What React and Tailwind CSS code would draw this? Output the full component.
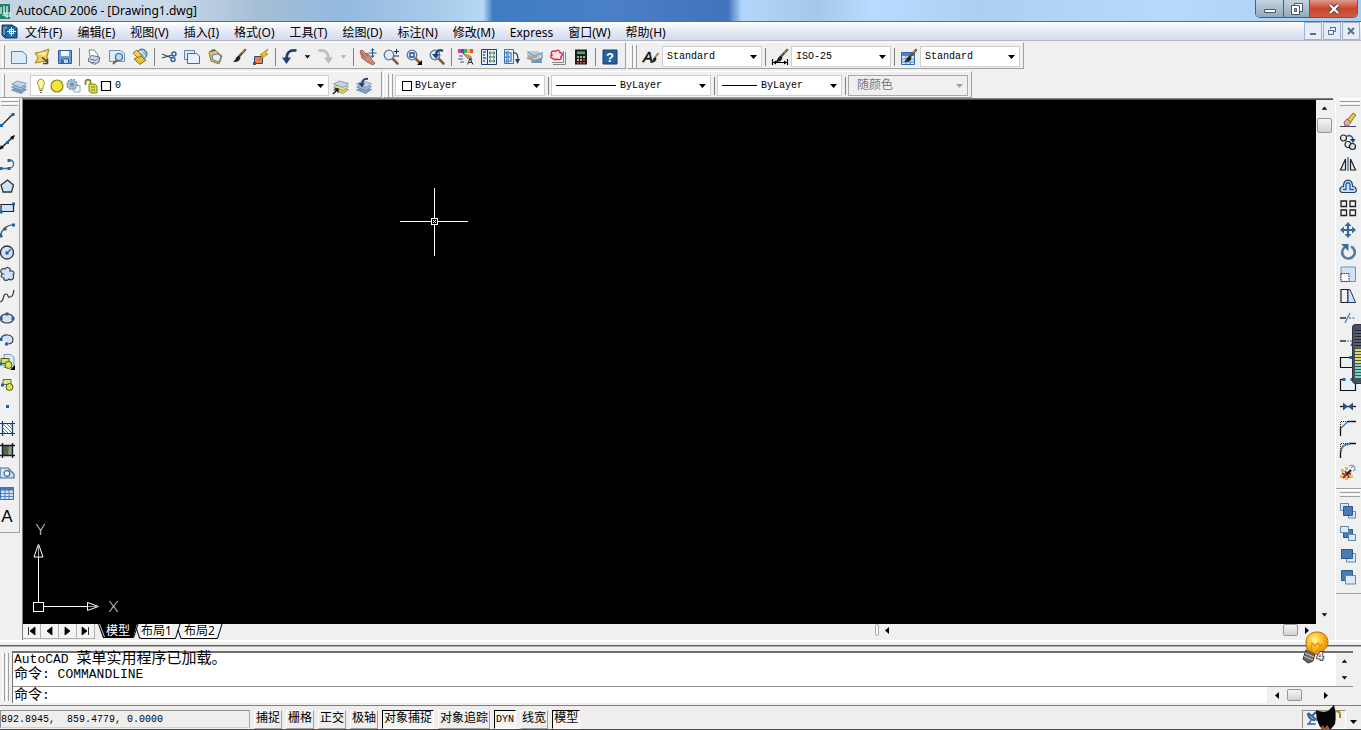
import React from "react";

const NAVY = "#1c3f66";
const BLUE = "#1e62a8";
const PALE = "#cfe2f6";

function Svg({ children, size = 18 }) {
  return (
    <svg width={size} height={size} viewBox="0 0 18 18" fill="none" className="shrink-0" aria-hidden="true">
      {children}
    </svg>
  );
}

const Dot = ({ x, y, c = BLUE }) => <rect x={x - 1.5} y={y - 1.5} width="3" height="3" fill={c} />;

const Brush = () => (
  <>
    <path d="M16 2 9.500 9" stroke="#6b4a2c" strokeWidth="2.400" strokeLinecap="round" />
    <path d="M15.500 2 13 5" stroke="#c89a62" strokeWidth="1" />
    <path d="M10 8c-3 0-3 4-6 6 4 .5 7-1 7.500-4.500z" fill="#222" />
  </>
);

const Lens = ({ children }) => (
  <>
    <path d="m10.500 10.500 5 5" stroke="#8a5a34" strokeWidth="2.500" strokeLinecap="round" />
    <circle cx="7" cy="7" r="4.800" fill="#dcebf8" stroke="#5c7690" strokeWidth="1.300" />
    {children}
  </>
);

const Layers = ({ a = "#7fa0c4", b = "#9db8d6", c = "#c3d5ea" }) => (
  <g stroke="#56769c" strokeWidth=".6">
    <path d="m1.500 13 6-3 9 2.500-5.500 4z" fill={a} />
    <path d="m1.500 10 6-3 9 2.500-5.500 4z" fill={b} />
    <path d="m1.500 7 6-3 9 2.500-5.500 4z" fill={c} />
  </g>
);

const fileTools = [
  ["新建", <path d="M1.500 3.500h11l4 3.500v8.500h-15z" fill="#dcebf8" stroke="#5b84b0" />],
  ["打开", <>
    <path d="M2 5 8 4l8-3-3 12-11 2 3-5z" fill="#e9cd55" stroke="#a08528" />
    <path d="m6 6 6-1-3 4 4 4" fill="none" stroke="#fff7b8" strokeWidth="1.500" />
    <path d="m9 9 5 5M14.500 10.500v5h-4.500" stroke="#5a4a18" strokeWidth="1.600" />
  </>],
  ["保存", <>
    <path d="M2.500 2.500h13v13h-13z" fill="#6e9dd6" stroke="#2f5c98" />
    <path d="M5 3h8v5H5z" fill="#eef5fc" />
    <path d="M5.500 11h7v4.500h-7z" fill="#c6d9ef" stroke="#2f5c98" />
    <path d="M7 12v3" stroke="#234a80" strokeWidth="1.500" />
  </>],
];
const printTools = [
  ["打印", <>
    <path d="M5 8 4 2h5l4 5-1 3" fill="#fff" stroke="#77839a" />
    <path d="m3.500 10.500 3-3 8 1.500v3l-3 3.500-8-2z" fill="#d5dbe6" stroke="#5d6c86" />
    <path d="m5 11 6 1.500 3-3" stroke="#5d6c86" />
    <path d="m5 14.500 5 2 5-3" stroke="#8b97ac" />
  </>],
  ["打印预览", <>
    <path d="M1.500 2.500h11l4 3v8h-15z" fill="#dcebf8" stroke="#6f93ba" />
    <path d="m9 12-4 4" stroke="#8a5a34" strokeWidth="2.200" />
    <circle cx="11" cy="9" r="3.500" fill="#bcd8f2" stroke="#456b92" strokeWidth="1.200" />
  </>],
  ["发布", <>
    <circle cx="11" cy="6" r="5" fill="#8db7dc" stroke="#436b90" />
    <path d="M8 3c3 1 5 3 6 6M7 6l6-3" stroke="#dff0ff" />
    <path d="m2 5 4-3 5 6-3 3z" fill="#f1d14e" stroke="#957715" />
    <path d="m3 11 7-3 5 4-6 4.500z" fill="#e8c33e" stroke="#8b6d13" />
  </>],
];
const editTools = [
  ["剪切", <>
    <path d="m2 6 10 4M2 10l10-3" stroke="#3b4a61" strokeWidth="1.300" />
    <circle cx="14" cy="6" r="2" stroke="#31609b" strokeWidth="1.400" />
    <circle cx="13" cy="11.500" r="2" stroke="#31609b" strokeWidth="1.400" />
  </>],
  ["复制", <>
    <path d="M1.500 2.500h10v9h-10z" fill="#dcebf8" stroke="#5b84b0" />
    <path d="M4.500 5.500h9l3 2.500v7.500h-12z" fill="#e8f2fc" stroke="#3f6c9e" />
  </>],
  ["粘贴", <>
    <path d="m3 4 6-2 7 6-3 8-8-3z" fill="#e1c65c" stroke="#8c7322" />
    <path d="m6 7 6-1 3 3-2 5-6-2z" fill="#e3effb" stroke="#597ba0" />
    <path d="m5 3 4-1" stroke="#666" strokeWidth="2" />
  </>],
  ["特性匹配", <Brush />],
  ["块编辑器", <>
    <path d="M2.500 8.500h8v7h-8z" fill="#ef7f4d" stroke="#394b66" />
    <path d="m16 1-8 6h3l-4 5 9-6h-3z" fill="#ffc928" stroke="#b27a10" strokeWidth=".8" />
    <Dot x={2.5} y={15.5} />
  </>],
];
const Undo = ({ c }) => (
  <>
    <path d="M15.500 2.500C8 1.500 5.500 5 5.500 11" stroke={c} strokeWidth="2.600" />
    <path d="M1 9.500h9L5.500 16z" fill={c} />
  </>
);
const zoomTools = [
  ["实时平移", <>
    <path d="m1 3 2-1 4 4 1-1 3 3 2 4 3 3-2 2-6-3-5-4z" fill="#c98a7a" stroke="#8e4e42" strokeWidth=".8" />
    <path d="m2 5 5 5M4 3l5 5" stroke="#8e4e42" strokeWidth=".8" />
    <path d="M13.500 1v8M9.500 5h8" stroke="#245a92" strokeWidth="1.200" />
    <path d="m12 2.500 1.500-2 1.500 2M12 7.500l1.500 2 1.500-2" stroke="#245a92" />
  </>],
  ["实时缩放", <><Lens /><path d="M14.500 1v5M12 3.500h5M12 8h5" stroke="#1b2b44" /></>],
  ["窗口缩放", <><Lens><path d="M5 5h4v4H5z" stroke="#1d4d90" strokeWidth="1.300" /></Lens><path d="M17 12v5h-5z" fill="#000" /></>],
  ["缩放上一个", <><Lens /><path d="M15 3C11 1 8 3 8 7" stroke="#1e4478" strokeWidth="2.200" /><path d="M4 6h7.500L8 11z" fill="#1e4478" /></>],
];
const paletteTools = [
  ["特性", <>
    <path d="M1 1h3v4H1z" fill="#e03a9c" /><path d="M4 1h3v4H4z" fill="#3b58dd" /><path d="M7 1h3v4H7z" fill="#2eb85c" /><path d="M10 1h3v4h-3z" fill="#f3c321" />
    <path d="M13 1h3v4h-3z" fill="#e7572c" />
    <path d="m6 5 5 5 2-1 2 3M2 8h4M1 11h5M3 14h4" stroke="#555" strokeWidth="1.200" />
    <path d="M7 6c5 0 8 2 8 4l-4 1z" fill="#c98a7a" />
    <path d="m10.500 16.500 2.500-6 3 6M12 14.500h3" stroke="#1c2c48" />
  </>],
  ["设计中心", <>
    <path d="M1.500 1.500h15v15h-15z" fill="#e5eff9" stroke={NAVY} />
    <path d="M7.500 2v14" stroke={NAVY} />
    <path d="M3 4h3M3 7h2M3 10h3M3 13h2" stroke={BLUE} strokeWidth="1.300" />
    <path d="M9.500 4h1.500v2H9.500zM13 4h1.500v2H13zM9.500 8h1.500v2H9.500zM13 8h1.500v2H13zM9.500 12h1.500v2H9.500zM13 12h1.500v2H13z" stroke="#3b6a3a" strokeWidth=".8" />
  </>],
  ["工具选项板", <>
    <path d="M1.500 1.500h9v14h-9z" fill="#e5eff9" stroke="#3e70a9" />
    <path d="M3 4h3v2H3zM3 8h3v2H3zM3 12h3v2H3zM8 4v10" stroke={BLUE} />
    <path d="M10 5c4-1 5 2 5 7" stroke={NAVY} strokeWidth="1.300" />
    <path d="M12 11h5l-2.500 5z" fill={NAVY} />
  </>],
  ["图纸集管理器", <>
    <path d="M1 3h11l4 3-3 4-7 2-5-4z" fill="#b5cfe5" />
    <path d="m2 4 6 4 8-3v5l-7 3-8-3" stroke="#839db4" strokeWidth="1.500" />
    <path d="m6 12 10-2v5H5z" fill="#7999b3" />
    <path d="m2 8 4 2 5-2" stroke="#b89c78" strokeWidth="2" />
  </>],
  ["标记集管理器", <>
    <path d="M4 16.500h12.500V4M3 14.500h11.500V3" stroke="#7d8694" />
    <path d="M4 10.500c-3 0-3-3-1-3.500-2-3 1-5 3-3.500 2-2.500 5-1 5 1 3 0 3 3 1 4 1 3-2 4-4 2.500-1 1-3 1-4-.5z" fill="#fde3e6" stroke="#d82b46" strokeWidth="1.400" />
  </>],
  ["快速计算器", <>
    <path d="M3 1.500h12v15H3z" fill="#1d1d1d" />
    <path d="M5 3.500h8V6H5z" fill="#4ab26b" />
    <path d="M5 9h2M8 9h2M11 9h2M5 12h2M8 12h2" stroke="#ddd" strokeWidth="1.500" />
    <path d="M11 12h2M5 14.700h2M8 14.700h2M11 14.700h2" stroke="#cf4a3c" strokeWidth="1.500" />
  </>],
];
const Help = () => (
  <>
    <path d="M2 2h14v14H2z" fill="#27619c" stroke="#17406f" />
    <text x="9" y="14" textAnchor="middle" fontSize="13" fontWeight="700" fill="#fff" fontFamily="Liberation Sans, sans-serif">?</text>
  </>
);

const drawTools = [
  ["直线", <><path d="M1 15 13 3" stroke="#222" strokeWidth="1.200" /><Dot x={1.5} y={14.5} /><Dot x={13} y={3.5} /></>],
  ["构造线", <><path d="M0 16 14 3" stroke="#111" strokeWidth="1.300" /><path d="m15 2-5 2 3 3zM-1 17l5-2-3-3z" fill="#111" /><Dot x={7.5} y={9.5} /></>],
  ["多段线", <><path d="M0 13.500h10M9 5c6 0 6 7 1 8" stroke="#4a6c90" strokeWidth="1.300" /><Dot x={1} y={13.5} /><Dot x={9} y={13.5} /><Dot x={9} y={5.500} /></>],
  ["正多边形", <path d="m7.500 3 6 5-2 7H3L1 8z" fill={PALE} stroke="#333" strokeWidth="1.300" />],
  ["矩形", <><path d="M1 5.500h12.500v7H1z" fill={PALE} stroke="#222" strokeWidth="1.200" /><Dot x={13.5} y={5} /><Dot x={1} y={13} /></>],
  ["圆弧", <><path d="M0 15C2 8 6 4 14 3.500" stroke="#444" strokeWidth="1.200" /><Dot x={1} y={15} /><Dot x={5} y={8} /><Dot x={13.500} y={4} /></>],
  ["圆", <><circle cx="7" cy="9.500" r="6.500" fill={PALE} stroke="#333" strokeWidth="1.300" /><path d="m7 10 4-4" stroke={BLUE} strokeWidth="1.300" /><Dot x={7} y={10} /></>],
  ["修订云线", <path d="M3 9C-1 8 1 2 5 4c2-3 6-1 5 2 4-1 5 3 3 4 2 4-2 6-4 4-2 2-6 2-5-1-3 0-4-3-1-4z" fill={PALE} stroke="#444" strokeWidth="1.200" />],
  ["样条曲线", <path d="M0 15c5-1 2-8 6-8 3 0 1 4 4 3 3 0 3-3 4-7" stroke="#333" strokeWidth="1.200" />],
  ["椭圆", <><ellipse cx="7" cy="9.500" rx="6.500" ry="4.500" fill={PALE} stroke="#333" strokeWidth="1.200" /><Dot x={7} y={5} /><Dot x={13} y={9.500} /><Dot x={1} y={9.500} /></>],
  ["椭圆弧", <><path d="M2 6c4-4 11-2 11 3 0 3-3 4-6 4L5 9z" fill={PALE} /><path d="M1 8c2-6 12-5 12 1 0 3-3 4-6 4" stroke="#444" strokeWidth="1.200" /><Dot x={1} y={8.500} /><Dot x={6.500} y={13} /></>],
  ["插入块", <><path d="M4 1.500h7l3 3v10H4z" fill="#dcebf8" stroke="#6f93ba" /><path d="M1 5.500h8v5H1z" fill="#d9df5c" stroke="#515a10" /><circle cx="8.500" cy="12" r="3.500" fill="#d9df5c" stroke="#515a10" /><Dot x={1} y={11} /><path d="M15 12v5h-5z" fill="#000" /></>],
  ["创建块", <><path d="M3 4.500h8v5H3z" fill="#e1e689" stroke="#4f7a42" /><circle cx="9.500" cy="12" r="3.500" fill="#d9df5c" stroke="#515a10" /><Dot x={2.500} y={10} /></>],
  ["点", <Dot x={7.500} y={9.500} />],
  ["图案填充", <><path d="M3 5h9v9H3z" fill="#fff" /><path d="m3 5 9 9M3 9l5 5M7 5l5 5M3 12l2 2M10 5l2 2" stroke={BLUE} strokeWidth=".8" /><path d="M0 4.500h15M0 14.500h15M2.500 2v15M12.500 2v15" stroke={NAVY} strokeWidth="1.200" /></>],
  ["渐变色", <><path d="M3 5h9v9H3z" fill="#59634b" /><path d="m9 5 3 0v9H8z" fill="#929b81" /><path d="M0 4.500h15M0 14.500h15M2.500 2v15M12.500 2v15" stroke="#101b2c" strokeWidth="1.400" /></>],
  ["面域", <><path d="M0 5h8l6 6v4H0z" fill={PALE} stroke="#44688f" strokeWidth="1.200" /><circle cx="7" cy="10.500" r="2.800" fill="#fff" stroke="#44688f" strokeWidth="1.200" /></>],
  ["表格", <><path d="M.5 2.500h13v12H.5z" fill="#d3e2f5" stroke="#3b6cb2" /><path d="M.5 2.500h13v3H.5z" fill="#4576c4" /><path d="M1 8.500h12M1 11.500h12M5 5v9M9 5v9" stroke="#5584c8" /></>],
  ["多行文字", <text x="7" y="15" textAnchor="middle" fontSize="17" fill="#000" fontFamily="Liberation Sans, sans-serif">A</text>],
];

const modifyTools = [
  ["删除", <><path d="M1 15.500h16" stroke="#3b4c66" /><path d="m8 9 6-7 3 2-6 8z" fill="#e5c83b" stroke="#6e5a16" strokeWidth=".8" /><path d="m5 11 3-3 4 3-3 4H6z" fill="#e9a9a0" stroke="#744" strokeWidth=".8" /></>],
  ["复制对象", <><circle cx="4.500" cy="5" r="3" fill="#e6eff8" stroke="#222" strokeWidth="1.200" /><circle cx="9" cy="11.500" r="3" fill="#e6eff8" stroke="#222" strokeWidth="1.200" /><circle cx="13.500" cy="13.500" r="3" fill={PALE} stroke="#222" strokeWidth="1.200" /><path d="M8 3c3-1 6 0 6 4" stroke={BLUE} strokeWidth="1.600" /><path d="M11 6h5.500L14 10z" fill={NAVY} /></>],
  ["镜像", <><path d="M9 2v14" stroke={BLUE} strokeWidth="1.200" /><path d="M6.500 4v11h-5zM11.500 4v11h5z" fill="#e2edf8" stroke="#222" strokeWidth="1.200" /></>],
  ["偏移", <>
    <path d="M3 15.500h12.500c3-1 2-6-2-6C14 1 4 1 4.500 9.500 0 9.500 0 15 3 15.500z" fill={PALE} stroke="#1c3f66" strokeWidth="1.200" />
    <path d="M4 12.500h3V8c0-3 4-3 4 0v4.500h4" stroke={BLUE} strokeWidth="1.300" />
  </>],
  ["阵列", <path d="M2 2h5.500v5.500H2zM11 2h5.500v5.500H11zM2 11h5.500v5.500H2zM11 11h5.500v5.500H11z" fill="#eaf2fa" stroke="#222" strokeWidth="1.300" />],
  ["移动", <><path d="M9 3v12M3 9h12" stroke="#386997" strokeWidth="2.200" /><path d="m9 1 3.500 4h-7zM9 17l3.500-4h-7zM1 9l4-3.500v7zM17 9l-4-3.500v7z" fill="#386997" /></>],
  ["旋转", <><path d="M6 4a6.300 6.300 0 1 0 6-.5" stroke="#507da6" strokeWidth="2.600" /><path d="M2 1h7.500v7z" fill="#386997" /></>],
  ["缩放", <><path d="M2 2h14.500v14.500H2z" fill={PALE} stroke="#6d91b9" /><path d="M2 8.500h8v8H2z" fill="#fff" stroke="#222" strokeDasharray="1.500 1" /></>],
  ["拉伸", <><path d="M9 2.500h2l5.500 13H9z" fill={PALE} stroke={NAVY} /><path d="M9 2.500H2v13h7" stroke="#222" strokeWidth="1.200" /><path d="M8.500 3v13" stroke="#222" strokeDasharray="1.500 1" /></>],
  ["修剪", <><path d="M1 9h6" stroke="#111" strokeWidth="1.300" /><path d="m6 14 5-10" stroke="#3d81ba" strokeWidth="1.300" /><path d="M10 9h7" stroke={BLUE} strokeDasharray="2 1.500" /></>],
  ["延伸", <><path d="M1 10h6" stroke="#111" strokeWidth="1.300" /><path d="M8 10h6" stroke={BLUE} strokeDasharray="2 1" /><path d="m12 15 4-9" stroke={BLUE} strokeWidth="1.300" /></>],
  ["打断于点", <><path d="M1.500 4.500h15v10h-15z" fill="#e6f0fa" stroke="#111" strokeWidth="1.200" /><Dot x={12} y={4.500} /></>],
  ["打断", <><path d="M4 4.500H1.500v11h15v-11H14" fill="#e6f0fa" stroke="#111" strokeWidth="1.200" /><Dot x={5} y={4.500} /><Dot x={13} y={4.500} /></>],
  ["合并", <><path d="M1 9.500h16" stroke="#111" strokeWidth="1.300" /><path d="m4 5.500 5 4L4 13.500zM14 5.500l-5 4 5 4z" fill="#26557f" /></>],
  ["倒角", <><path d="M1.500 8v9M9 2.500h8" stroke="#111" strokeWidth="1.300" /><path d="m2 9 7-6.500" stroke="#3d81ba" strokeWidth="1.500" /><path d="M1.500 8V2.500H9" stroke="#222" strokeDasharray="1 1" /></>],
  ["圆角", <><path d="M1.500 10v7M10 2.500h7" stroke="#111" strokeWidth="1.300" /><path d="M2 11c0-5 3-8 9-8" stroke="#3d81ba" strokeWidth="1.800" /><path d="M1.500 10V2.500H10" stroke="#222" strokeDasharray="1 1" /></>],
  ["分解", <>
    <path d="M2 6h3v3H2zM6 4h3v3H6zM1 12h3v3H1zM6 14h3v3H6zM11 12h3v3h-3z" fill="#f0bf22" />
    <path d="m3 10 3 2M6 8l2 3M4 15l3-3M10 15l-1-3M12 11l-3-1" stroke="#b4251d" strokeWidth="2" />
    <path d="m7 12 5-5" stroke="#222" strokeWidth="2.200" />
    <path d="M10 3c4-2 6 0 6 4M12 5l3-2M14 8l2-1" stroke="#5483ad" />
  </>],
];

const orderTools = [
  ["前置", <><path d="M1.500 1.500h8v7h-8zM9.500 9.500h7v6.500h-7z" fill="#dceaf7" stroke="#5f88b2" /><path d="M4.500 4.500h9v9h-9z" fill="#4a7daf" stroke="#2d5a8a" /></>],
  ["后置", <><path d="M4.500 5.500h9v8h-9z" fill="#4a7daf" stroke="#2d5a8a" /><path d="M1.500 2.500h8v6h-8zM9.500 10.500h7v6h-7z" fill="#dceaf7" stroke="#5f88b2" /></>],
  ["置于对象之上", <><path d="M7.500 7.500h9v8.500h-9z" fill="#dceaf7" stroke="#5f88b2" /><path d="M2.500 3.500h11v9h-11z" fill="#4a7daf" stroke="#2d5a8a" /></>],
  ["置于对象之下", <><path d="M2.500 2.500h11v10h-11z" fill="#4a7daf" stroke="#2d5a8a" /><path d="M6.500 7.500h10v8.500h-10z" fill="#dceaf7" stroke="#5f88b2" /></>],
];

const Tool = ({ label, children }) => (
  <button type="button" aria-label={label} title={label} className="flex h-[22px] w-[23px] shrink-0 items-center justify-center">
    <Svg>{children}</Svg>
  </button>
);
const Tools = ({ items }) => items.map(([label, art]) => <Tool key={label} label={label}>{art}</Tool>);

const Sep = () => (
  <div className="flex w-[6px] shrink-0 justify-center">
    <div className="h-[18px] w-px bg-[#808080]" />
  </div>
);

const Grip = () => (
  <div className="mr-[2px] flex shrink-0 gap-px self-stretch">
    <div className="w-[3px] border-r border-l border-r-[#a0a0a0] border-l-white" />
    <div className="w-[3px] border-r border-l border-r-[#a0a0a0] border-l-white" />
  </div>
);

const HGrip = () => (
  <div className="mx-px mb-[3px] flex flex-col gap-px">
    <div className="h-[3px] border-t border-b border-t-white border-b-[#a0a0a0]" />
    <div className="h-[3px] border-t border-b border-t-white border-b-[#a0a0a0]" />
  </div>
);

const Bar = ({ children, first }) => (
  <div className={"flex h-[27px] shrink-0 items-center border-t border-r border-b border-t-white border-r-[#a0a0a0] border-b-[#a0a0a0] pt-[2px] pr-[3px] " + (first ? "border-l-0 pl-px" : "ml-px border-l border-l-white pl-[2px]")}>
    {children}
  </div>
);

const Caret = ({ dir = "down", c = "#000", small }) => {
  const d = { down: "M1 3h7L4.500 7z", up: "M1 6h7L4.500 2z", left: "M6 1v7L2 4.500z", right: "M3 1v7l4-3.500z" }[dir];
  const s = small ? 7 : 9;
  return <svg width={s} height={s} viewBox="0 0 9 9" className="shrink-0" aria-hidden="true"><path d={d} fill={c} /></svg>;
};

const Combo = ({ label, value, width, lead, disabled }) => (
  <div className={"flex h-[21px] shrink-0 items-center border pr-[3px] pl-1 " + width + (disabled ? " border-[#a8a8a8] bg-[#f0f0f0]" : " border-[#d0d0d0] bg-white")}>
    {lead}
    <select
      aria-label={label}
      disabled={disabled}
      className={"h-full min-w-0 flex-1 appearance-none bg-transparent outline-none " + (disabled ? "pl-1 text-xs text-[#777] opacity-100" : "text-[10px] text-black")}
    >
      <option>{value}</option>
    </select>
    <Caret c={disabled ? "#a0a0a0" : "#000"} />
  </div>
);

const LayerLead = () => (
  <svg width="79" height="18" viewBox="0 0 79 18" fill="none" className="mr-px shrink-0" aria-hidden="true">
    <path d="M6 2a4 4 0 0 1 2 7v3H4V9a4 4 0 0 1 2-7z" fill="#fff8a8" stroke="#a39a3c" />
    <path d="M4.500 13.500h3M5 15.500h2" stroke="#555" />
    <circle cx="22" cy="9" r="6" fill="#f5e435" stroke="#8a8525" strokeWidth="1.200" />
    <path d="M39 8.500h6v6.500h-6z" fill="#f6f9fc" stroke="#8da4ba" />
    <circle cx="37" cy="7.500" r="5" fill="#a9bfd2" stroke="#7f99ae" strokeWidth="1.500" strokeDasharray="2 1" />
    <circle cx="37" cy="7.500" r="2" fill="#6e93b2" />
    <path d="M50.500 8V5c0-3 5-3 5 0v2" stroke="#858b28" strokeWidth="1.800" />
    <path d="M54 7h6l2 2v7h-6l-2-2z" fill="#dbdd48" stroke="#82861e" />
    <path d="M56 10h4M56 13h4" stroke="#82861e" />
    <path d="M66.500 4.500h9v9h-9z" fill="#fff" stroke="#000" strokeWidth="1.200" />
  </svg>
);

const Swatch = () => <span className="mx-[2px] mr-[3px] h-[10px] w-[10px] shrink-0 border border-black bg-white" />;

const menus = ["文件(F)", "编辑(E)", "视图(V)", "插入(I)", "格式(O)", "工具(T)", "绘图(D)", "标注(N)", "修改(M)", "Express", "窗口(W)", "帮助(H)"];

const status = [
  ["捕捉", false], ["栅格", false], ["正交", false], ["极轴", false], ["对象捕捉", true],
  ["对象追踪", false], ["DYN", true], ["线宽", false], ["模型", true],
];

const Thumb = ({ className = "" }) => (
  <div className={"rounded-[2px] border border-[#979797] bg-linear-to-b from-[#f6f6f6] to-[#d2d2d2] " + className} />
);

const UI = "font-['Noto_Sans','Noto_Sans_CJK_SC',sans-serif]";
const MONO = "font-['Liberation_Mono','Noto_Sans_CJK_SC',monospace]";

function TitleBar() {
  return (
    <header className="flex h-[21px] shrink-0 items-center bg-[linear-gradient(90deg,#c3d3df_0%,#cbdbea_12%,#a5bed5_19%,#93b9df_25%,#a8cbea_32%,#b5d8f6_35.500%,#3f7dc2_36.200%,#4a7fc6_45%,#4272bd_53.500%,#b2d7fa_54.500%,#a5c8e9_60%,#b8dcff_64%,#acd0f2_72%,#b7dafb_86%,#a8cdf0_100%)]">
      <svg width="12" height="18" viewBox="0 0 12 18" className="shrink-0" aria-hidden="true">
        <path d="M0 2h10v15H0z" fill="#22806f" />
        <path d="M1 5v7M4 4v8M7 4v5M2 13h3M7 9v7M5 11h5v3H5z" stroke="#e9fff7" fill="none" strokeWidth="1.200" />
      </svg>
      <h1 className="ml-1 flex-1 text-[12px] text-black">AutoCAD 2006 - [Drawing1.dwg]</h1>
      <div className="mr-[3px] flex h-[18px] self-start overflow-hidden rounded-b-[5px] border border-t-0 border-[#4c5f74]">
        <button type="button" aria-label="最小化" className="flex w-[28px] items-center justify-center border-r border-[#4c5f74] bg-linear-to-b from-[#c6d2df] to-[#94a8bd]">
          <svg width="14" height="14" viewBox="0 0 14 14"><path d="M1.500 7.500h11v3h-11z" fill="#fff" stroke="#49566a" /></svg>
        </button>
        <button type="button" aria-label="还原" className="flex w-[26px] items-center justify-center border-r border-[#4c5f74] bg-linear-to-b from-[#c6d2df] to-[#94a8bd]">
          <svg width="14" height="14" viewBox="0 0 14 14"><path d="M4.500 1.500h8v8h-8z" fill="#fff" stroke="#49566a" /><path d="M1.500 3.500h8v9h-8z" fill="#fff" stroke="#49566a" /><path d="M4.500 6.500h2v3h-2z" fill="#94a8bd" stroke="#49566a" /></svg>
        </button>
        <button type="button" aria-label="关闭" className="flex w-[47px] items-center justify-center bg-linear-to-b from-[#dc9a8a] via-[#c9452d] to-[#cf5c3c]">
          <svg width="14" height="14" viewBox="0 0 14 14"><path d="m3 3 8 8M11 3l-8 8" stroke="#53343a" strokeWidth="4" /><path d="m3 3 8 8M11 3l-8 8" stroke="#fff" strokeWidth="2.400" /></svg>
        </button>
      </div>
    </header>
  );
}

function MenuBar() {
  const box = "flex h-[18px] w-[18px] items-center justify-center border border-[#a3b3cc] bg-[#e4edf8]";
  return (
    <nav className="flex h-5 shrink-0 items-center border-t border-b border-t-[#54708f] border-b-[#b3b7c6] bg-linear-to-b from-white via-[#e6eaf6] to-[#d5dbef]">
      <svg width="17" height="16" viewBox="0 0 17 16" className="ml-px shrink-0" aria-hidden="true">
        <path d="M1 2h10l5 3v10H4l-3-3z" fill="#1e5f8e" stroke="#123c60" />
        <path d="M6 4h9v10H6z" fill="#266b9e" />
        <path d="M10.500 4v9M6 8.500h9M8.500 6.500h4v4h-4z" stroke="#e4f4ff" fill="none" />
        <path d="M3 4v8M5 3v3" stroke="#9cc7e6" />
      </svg>
      <ul className="flex flex-1 gap-px">
        {menus.map((m) => (
          <li key={m}><button type="button" className="px-[7px] text-[12px] leading-[18px] whitespace-nowrap text-black">{m}</button></li>
        ))}
      </ul>
      <div className="mr-px flex gap-px">
        <button type="button" aria-label="最小化图形" className={box}><svg width="10" height="10"><path d="M2 8h6" stroke="#5a6e8c" strokeWidth="2" /></svg></button>
        <button type="button" aria-label="还原图形" className={box}><svg width="10" height="10" fill="none" stroke="#5a6e8c"><path d="M3.500 3V1.500h5v4H7M1.500 4.500h5v4h-5zM3 1.500h6M1 4.500h6" /></svg></button>
        <button type="button" aria-label="关闭图形" className={box}><svg width="10" height="10"><path d="m2 2 6 6M8 2 2 8" stroke="#5a6e8c" strokeWidth="2" /></svg></button>
      </div>
    </nav>
  );
}

function Toolbars() {
  return (
    <div className={"flex shrink-0 flex-col gap-[2px] pt-px " + MONO}>
      <div className="flex">
        <Bar first>
          <div className="mr-[2px] ml-px h-full w-[3px] border-r border-l border-r-[#a0a0a0] border-l-white" />
          <Tools items={fileTools} /><Sep />
          <Tools items={printTools} /><Sep />
          <Tools items={editTools} /><Sep />
          <Tool label="放弃"><Undo c="#1c3f73" /></Tool>
          <button type="button" aria-label="放弃列表" className="flex w-3 justify-center"><Caret small /></button>
          <Tool label="重做"><g transform="matrix(-1 0 0 1 18 0)"><Undo c="#bcbcbc" /></g></Tool>
          <button type="button" aria-label="重做列表" className="flex w-[14px] justify-center"><Caret small c="#b0b0b0" /></button>
          <Sep />
          <Tools items={zoomTools} /><Sep />
          <Tools items={paletteTools} /><Sep />
          <Tool label="帮助"><Help /></Tool>
          <div className="w-px" />
        </Bar>
        <Bar>
          <Grip />
          <Tool label="文字样式">
            <text x="1" y="14" fontSize="15" fontStyle="italic" fill="#111" stroke="#111" strokeWidth=".5" fontFamily="Liberation Sans, sans-serif">A</text>
            <path d="m16.500 5-4 5" stroke="#a97a4a" strokeWidth="2" /><path d="M13 9c-2 1-2 4-5 6 3 0 6-1 6.500-4.500z" fill="#222" />
          </Tool>
          <Combo label="文字样式" value="Standard" width="w-[100px]" /><Sep />
          <Tool label="标注样式"><Brush /><path d="M1.500 11v6M16.500 11v6M2 14.500h14" stroke="#000" strokeWidth="1.200" /><path d="m2 14.500 3-2v4zM16 14.500l-3-2v4z" fill="#000" /></Tool>
          <Combo label="标注样式" value="ISO-25" width="w-[100px]" /><Sep />
          <Tool label="表格样式"><path d="M1.500 4.500h13v12h-13z" fill="#d9e7f8" stroke="#2f66b0" /><path d="M2 5h12v3H2z" fill="#4f85cd" /><path d="M2 11h12M2 14h12M6 8v8M10 8v8" stroke="#4f85cd" /><Brush /></Tool>
          <Combo label="表格样式" value="Standard" width="w-[100px]" />
        </Bar>
      </div>
      <div className="flex">
        <Bar first>
          <div className="mr-[2px] ml-px h-full w-[3px] border-r border-l border-r-[#a0a0a0] border-l-white" />
          <Tool label="图层特性管理器"><Layers /></Tool>
          <Combo label="图层" value="0" width="w-[299px]" lead={<LayerLead />} />
          <Tool label="将对象的图层置为当前"><Layers a="#e7d64a" b="#efe169" /><path d="m1 17 5-5M2.500 12H6v3.500" stroke="#111" strokeWidth="1.300" /></Tool>
          <Tool label="上一个图层"><Layers /><path d="M13 2C9 1 7 4 7 7" stroke="#1e4478" strokeWidth="2" /><path d="M3.500 6H10l-3 4.500z" fill="#1e4478" /></Tool>
          <div className="w-[3px]" />
        </Bar>
        <Bar>
          <Grip />
          <Combo label="颜色" value="ByLayer" width="w-[150px]" lead={<Swatch />} /><Sep />
          <Combo label="线型" value="ByLayer" width="w-[160px]" lead={<span className="mr-1 h-px w-[60px] shrink-0 bg-black" />} /><Sep />
          <Combo label="线宽" value="ByLayer" width="w-[125px]" lead={<span className="mr-1 h-px w-[35px] shrink-0 bg-black" />} /><Sep />
          <Combo label="打印样式" value="随颜色" width="w-[120px]" disabled />
        </Bar>
      </div>
    </div>
  );
}

function SideTools({ items, className = "" }) {
  return (
    <div className={"flex flex-col border-t border-b border-t-white border-b-[#a0a0a0] pb-[5px] " + className}>
      <HGrip />
      {items.map(([label, art]) => (
        <button key={label} type="button" aria-label={label} title={label} className="flex h-[22px] items-center"><Svg>{art}</Svg></button>
      ))}
    </div>
  );
}

function LayoutTabs() {
  const nav = [["第一个", "M2.500 1v8M9 1v8L4 5z"], ["上一个", "M8 1v8L3 5z"], ["下一个", "M3 1v8l5-4z"], ["最后一个", "M8.500 1v8M2 1v8l5-4z"]];
  return (
    <div className="flex h-[16px] items-start bg-[#f0f0f0] text-[12px] leading-[14px]">
      {nav.map(([l, d]) => (
        <button key={l} type="button" aria-label={l} className="flex h-[15px] w-[18px] items-center justify-center border-r border-b border-[#b0b0b0] bg-[#f4f4f4]">
          <svg width="11" height="10" viewBox="0 0 11 10"><path d={d} fill="#000" /><path d={d} stroke="#000" strokeWidth=".8" fill="none" /></svg>
        </button>
      ))}
      <svg width="9" height="15" viewBox="0 0 9 15" className="ml-[2px] shrink-0"><path d="M1 0h8v14H6z" fill="#000" /><path d="m2.500 0 5 13" stroke="#fff" strokeWidth=".8" /></svg>
      <button type="button" className="bg-black text-white">模型</button>
      <svg width="11" height="15" viewBox="0 0 11 15" className="shrink-0"><path d="M0 0h7L3 14H0z" fill="#000" /><path d="M8 0 3.500 14M6.500 5l3 9M9 14h2" stroke="#000" fill="none" /></svg>
      <button type="button" className="bg-white shadow-[0_1px_0_#000]">布局1</button>
      <svg width="12" height="15" viewBox="0 0 12 15" className="shrink-0"><path d="M0 14.500h3.500L8 0M6 6l3 8.500h3" stroke="#000" fill="none" /></svg>
      <button type="button" className="bg-white shadow-[0_1px_0_#000]">布局2</button>
      <svg width="8" height="15" viewBox="0 0 8 15" className="shrink-0"><path d="M0 14.500h2.500L7 0" stroke="#000" fill="none" /></svg>
      <div className="flex-1" />
      <div className="flex w-[35%] items-center">
        <div className="h-[12px] w-[4px] rounded-[2px] border border-[#a8a8a8] bg-white" />
        <div className="ml-1"><Caret dir="left" /></div>
        <div className="flex-1" />
        <Thumb className="h-[12px] w-[15px]" />
        <div className="mr-[22px] ml-1"><Caret dir="right" /></div>
      </div>
    </div>
  );
}

function Drawing() {
  return (
    <main className="mr-[2px] ml-[2px] flex min-w-0 flex-1 flex-col border-t border-l border-[#808080]">
      <div className="flex min-h-0 flex-1 border-t border-[#505050]">
        <div className="relative min-w-0 flex-1 overflow-hidden bg-black">
          <svg width="70" height="70" viewBox="0 0 70 70" className="absolute top-[87px] left-[377px]" fill="none" stroke="#fff" shapeRendering="crispEdges">
            <path d="M34.500 1v30M34.500 38v31M0 34.500h31M38 34.500h30M31.500 31.500h6v6h-6zM33 33l3 3M36 33l-3 3" />
          </svg>
          <svg width="100" height="104" viewBox="0 0 100 104" className="absolute bottom-0 left-0" fill="none" stroke="#fff">
            <path d="M10.500 82.500h10v9h-10zM15.500 82V37M21 86.500h44" shapeRendering="crispEdges" />
            <path d="m11 37 4.500-13L20 37zM64.500 82.500v8l11-4z" />
            <path d="M15.500 24v13M65 86.500h10" stroke="#aaa" />
            <text x="17.500" y="15" fontSize="16" textAnchor="middle" fill="#e8e8e8" stroke="none" fontFamily="Lato, sans-serif" fontWeight="300">Y</text>
            <text x="90.500" y="92" fontSize="16" textAnchor="middle" fill="#e8e8e8" stroke="none" fontFamily="Lato, sans-serif" fontWeight="300">X</text>
          </svg>
        </div>
        <div className="flex w-[17px] flex-col items-center bg-[#f0f0f0] pt-[5px] pb-[6px]">
          <Caret dir="up" small />
          <Thumb className="mt-[6px] h-[15px] w-[15px]" />
          <div className="flex-1" />
          <Caret small />
        </div>
      </div>
      <LayoutTabs />
    </main>
  );
}

function CommandPane() {
  return (
    <section aria-label="命令行" className={"flex shrink-0 pt-1 " + MONO}>
      <div className="mr-[2px] ml-[2px] flex w-2 gap-px py-[2px]">
        <div className="w-[3px] border-r border-l border-r-[#a0a0a0] border-l-white" />
        <div className="w-[3px] border-r border-l border-r-[#a0a0a0] border-l-white" />
      </div>
      <div className="mr-2 flex min-w-0 flex-1 flex-col border-t-2 border-l border-[#707070]">
        <div className="flex h-[34px] border-b border-[#909090] bg-white">
          <div className="flex-1 pl-px text-[13px] leading-[14px] whitespace-pre text-black">
            <p className="leading-[14px]">AutoCAD <span className="text-[15px] leading-[14px]">菜单实用程序已加载。</span></p>
            <p className="leading-[14px]"><span className="text-[14px] leading-[14px]">命令</span>: COMMANDLINE</p>
          </div>
          <div className="flex w-[17px] flex-col items-center justify-between bg-[#f0f0f0] py-[5px]">
            <Caret dir="up" small /><Caret small />
          </div>
        </div>
        <div className="flex h-[16px] items-center bg-white pl-px">
          <label htmlFor="cmd" className="text-[13px] leading-[15px] text-black"><span className="text-[14px]">命令</span>:</label>
          <input id="cmd" type="text" className="h-[14px] min-w-0 flex-1 bg-transparent px-1 text-[13px] outline-none" />
          <div className="flex h-full w-[86px] items-center bg-[#f0f0f0] pl-[6px]">
            <Caret dir="left" />
            <Thumb className="ml-[5px] h-[12px] w-[15px]" />
            <div className="w-[19px]" />
            <Caret dir="right" />
          </div>
        </div>
      </div>
    </section>
  );
}

function StatusBar() {
  return (
    <footer className={"mt-[2px] flex h-[25px] shrink-0 items-center border-t border-b border-t-[#808080] border-b-[#505050] bg-[#f0eeed] pt-[3px] " + MONO}>
      <div className="mr-1 flex h-[18px] w-[250px] items-center border border-t-[#909090] border-r-[#a8a8a8] border-b-[#d0d0d0] border-l-[#909090] text-[10px] whitespace-pre text-black">892.8945,  859.4779, 0.0000</div>
      <div className="flex gap-1">
        {status.map(([s, on]) => (
          <button
            key={s}
            type="button"
            aria-pressed={on}
            className={"flex h-[19px] items-center border px-px whitespace-nowrap text-black " + (s === "DYN" ? "text-[10px] " : "text-[12px] ") + (on ? "border-t-black border-r-white border-b-white border-l-black bg-[#f6f5f4]" : "border-t-white border-r-[#a0a0a0] border-b-[#a0a0a0] border-l-white")}
          >
            {s}
          </button>
        ))}
      </div>
      <div className="flex-1" />
      <div className="flex h-[19px] w-[44px] items-center border border-t-[#909090] border-r-white border-b-white border-l-[#909090]">
        <svg width="40" height="24" viewBox="0 0 40 24" className="shrink-0 overflow-visible" aria-hidden="true">
          <path d="M5 6c0 5 4 8 9 7M5 6l9 7M9 9l4-4" stroke="#345f98" strokeWidth="2" fill="#b9d2ee" />
          <path d="M4 17h9M8 13l-2 4" stroke="#345f98" strokeWidth="1.500" />
          <path d="M31 8c0-5 6-5 6 0v3" fill="none" stroke="#a98a1c" strokeWidth="2" />
          <path d="M13 3c4 2 9 2 12 1l6-6c2 7 2 13 1 19l-4 5h-9c-4-4-6-11-6-19z" fill="#050505" />
          <path d="m18 22 1-4 3 3 2-3 3 4z" fill="#b7532b" />
          <path d="m12 12 3 4 1 5-3-2z" fill="#fff" />
        </svg>
      </div>
      <button type="button" aria-label="状态栏菜单" className="mx-[3px] pt-1"><Caret /></button>
    </footer>
  );
}

export default function App() {
  return (
    <div className={"relative flex h-screen flex-col overflow-hidden bg-[#f0f0f0] " + UI}>
      <TitleBar />
      <MenuBar />
      <Toolbars />
      <div className="flex min-h-0 flex-1">
        <aside className="w-5 shrink-0 overflow-hidden">
          <SideTools items={drawTools} className="border-r border-r-[#a0a0a0]" />
        </aside>
        <Drawing />
        <aside className="w-[26px] shrink-0 overflow-hidden border-l border-white">
          <SideTools items={modifyTools} className="pl-[3px]" />
          <SideTools items={orderTools} className="pl-[3px]" />
        </aside>
      </div>
      <div className="h-[5px] shrink-0 border-t-2 border-white bg-[#f0f0f0]" />
      <div className="h-[2px] shrink-0 border-t border-[#606060] bg-[#b0b0b0]" />
      <CommandPane />
      <StatusBar />
      <div className="absolute top-[324px] right-0 flex h-[60px] w-[9px] flex-col justify-center gap-px rounded-l-[4px] border border-r-0 border-[#2d3340] bg-[#4a4f5e] pl-[2px]">
        <div className="h-[18px] bg-[repeating-linear-gradient(#23262f_0_1px,#5c6170_1px_3px)]" />
        <div className="h-[14px] bg-[repeating-linear-gradient(#d9dc5c_0_2px,#4a4f5e_2px_3px)]" />
        <div className="h-[14px] bg-[repeating-linear-gradient(#6fd3c6_0_2px,#4a4f5e_2px_3px)]" />
      </div>
      <svg width="30" height="36" viewBox="0 0 30 36" className="absolute right-[30px] bottom-[64px]" aria-label="提示">
        <defs><radialGradient id="glow" cx=".4" cy=".35"><stop offset="0" stopColor="#fff7b0" /><stop offset=".6" stopColor="#ffc629" /><stop offset="1" stopColor="#f09a12" /></radialGradient></defs>
        <path d="m5 20 9 4-2 7-5 2-5-4z" fill="#666" stroke="#333" />
        <path d="m4 23 9 4M3 26l9 4" stroke="#bbb" strokeWidth="1.200" />
        <path d="M16 2c7 0 11 5 11 10 0 8-7 9-10 13L6 20C6 17 5 16 5 12 5 6 10 2 16 2z" fill="url(#glow)" stroke="#b86f0c" />
        <path d="m10 21 1-8 3 3 3-3 2 3 2-2-6 9" fill="none" stroke="#e88a10" strokeWidth="1.200" />
        <text x="16" y="30" fontSize="11" fontWeight="700" fill="#fff" stroke="#444" strokeWidth="2" paintOrder="stroke" fontFamily="Liberation Sans, sans-serif">4</text>
      </svg>
    </div>
  );
}
